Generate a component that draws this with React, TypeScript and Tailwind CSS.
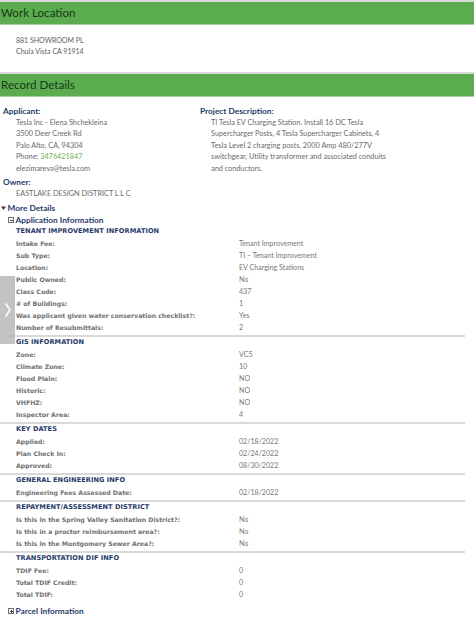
import React from "react";

const bodyFont = { fontFamily: "Lato, 'Open Sans', sans-serif" };

function SectionBar({ title }: { title: string }) {
  return (
    <div className="border-t-2 border-[#dadada] border-b border-b-[#a9cfa2] bg-[#5aac4f] h-[25px] flex items-center pl-[1px]">
      <span className="text-[11.6px] text-[#173a16] leading-none" style={bodyFont}>
        {title}
      </span>
    </div>
  );
}

type Row = [string, string];

function InfoGroup({ title, rows, last }: { title: string; rows: Row[]; last?: boolean }) {
  return (
    <div className={last ? "" : "border-b-2 border-[#d9d9d9] pb-[1px]"}>
      <div className="pl-[16px] h-[12px] flex items-center text-[6.6px] font-bold text-[#1f3a68] tracking-[0.05px]" style={{ fontFamily: "'DejaVu Sans', Verdana, sans-serif" }}>
        {title}
      </div>
      {rows.map(([k, v], i) => (
        <div key={i} className="flex h-[12px] items-center">
          <div className="pl-[16px] w-[239px] text-[6.2px] font-bold text-[#707070]" style={{ fontFamily: "'DejaVu Sans', Verdana, sans-serif" }}>
            {k}
          </div>
          <div className="text-[7.1px] text-[#777777]" style={bodyFont}>
            {v}
          </div>
        </div>
      ))}
    </div>
  );
}

export default function App() {
  return (
    <div className="relative w-[474px] h-[628px] bg-white overflow-hidden" style={bodyFont}>
      <SectionBar title="Work Location" />
      <div className="pl-[16px] pt-[10px] pb-[15px] text-[7px] leading-[11px] text-[#606060]">
        <div>881 SHOWROOM PL</div>
        <div>Chula Vista CA 91914</div>
      </div>
      <SectionBar title="Record Details" />

      <div className="flex pt-[8px]">
        <div className="w-[197px]">
          <div className="pl-[3px] h-[12px] flex items-center text-[8.3px] font-bold text-[#1f3a68]">Applicant:</div>
          <div className="pl-[16px] text-[7.3px] leading-[11.4px] text-[#6a6a6a]">
            <div>Tesla Inc - Elena Shchekleina</div>
            <div>3500 Deer Creek Rd</div>
            <div>Palo Alto, CA, 94304</div>
            <div>
              Phone: <span className="text-[#6db35a]">3476421847</span>
            </div>
            <div>elezimareva@tesla.com</div>
          </div>
        </div>
        <div className="flex-1">
          <div className="pl-[3px] h-[12px] flex items-center text-[8.3px] font-bold text-[#1f3a68]">Project Description:</div>
          <div className="pl-[14px] text-[7.3px] leading-[11.4px] text-[#6a6a6a] whitespace-nowrap">
            <div>TI Tesla EV Charging Station. Install 16 DC Tesla</div>
            <div>Supercharger Posts, 4 Tesla Supercharger Cabinets, 4</div>
            <div>Tesla Level 2 charging posts, 2000 Amp 480/277V</div>
            <div>switchgear, Utility transformer and associated conduits</div>
            <div>and conductors.</div>
          </div>
        </div>
      </div>

      <div className="mt-[2px] pl-[3px] h-[12px] flex items-center text-[8.3px] font-bold text-[#1f3a68]">Owner:</div>
      <div className="pl-[16px] text-[7.3px] leading-[11px] text-[#6a6a6a]">EASTLAKE DESIGN DISTRICT L L C</div>

      <div className="mt-[3px] h-[12px] flex items-center text-[8.3px] font-bold text-[#1f3a68]">
        <svg width="7" height="6" viewBox="0 0 7 6" className="mr-[0.5px]">
          <path d="M1 1.5 L6 1.5 L3.5 5 Z" fill="#3a3a3a" />
        </svg>
        More Details
      </div>
      <div className="h-[12px] flex items-center pl-[8px] text-[8.3px] font-bold text-[#1f3a68]">
        <span className="w-[6px] h-[6px] border border-[#6f6f6f] flex items-center justify-center mr-[1.5px]">
          <span className="w-[3px] h-[1px] bg-[#444]" />
        </span>
        Application Information
      </div>

      <div className="w-[465px]">
        <InfoGroup
          title="TENANT IMPROVEMENT INFORMATION"
          rows={[
            ["Intake Fee:", "Tenant Improvement"],
            ["Sub Type:", "TI \u2013 Tenant Improvement"],
            ["Location:", "EV Charging Stations"],
            ["Public Owned:", "No"],
            ["Class Code:", "437"],
            ["# of Buildings:", "1"],
            ["Was applicant given water conservation checklist?:", "Yes"],
            ["Number of Resubmittals:", "2"],
          ]}
        />
        <InfoGroup
          title="GIS INFORMATION"
          rows={[
            ["Zone:", "VC5"],
            ["Climate Zone:", "10"],
            ["Flood Plain:", "NO"],
            ["Historic:", "NO"],
            ["VHFHZ:", "NO"],
            ["Inspector Area:", "4"],
          ]}
        />
        <InfoGroup
          title="KEY DATES"
          rows={[
            ["Applied:", "02/18/2022"],
            ["Plan Check In:", "02/24/2022"],
            ["Approved:", "08/30/2022"],
          ]}
        />
        <InfoGroup title="GENERAL ENGINEERING INFO" rows={[["Engineering Fees Assessed Date:", "02/18/2022"]]} />
        <InfoGroup
          title="REPAYMENT/ASSESSMENT DISTRICT"
          rows={[
            ["Is this in the Spring Valley Sanitation District?:", "No"],
            ["Is this in a proctor reimbursement area?:", "No"],
            ["Is this in the Montgomery Sewer Area?:", "No"],
          ]}
        />
        <InfoGroup
          title="TRANSPORTATION DIF INFO"
          last
          rows={[
            ["TDIF Fee:", "0"],
            ["Total TDIF Credit:", "0"],
            ["Total TDIF:", "0"],
          ]}
        />
      </div>

      <div className="mt-[4px] h-[12px] flex items-center pl-[8px] text-[8.3px] font-bold text-[#1f3a68]">
        <span className="w-[6px] h-[6px] border border-[#6f6f6f] relative flex items-center justify-center mr-[1.5px]">
          <span className="w-[3px] h-[1px] bg-[#444]" />
          <span className="absolute w-[1px] h-[3px] bg-[#444]" />
        </span>
        Parcel Information
      </div>

      <div className="absolute left-0 top-[276px] w-[15px] h-[68px] rounded-r-[34px/34px] bg-[#b9b9b9]/85 flex items-center justify-center">
        <svg width="8" height="16" viewBox="0 0 8 16">
          <path d="M2 2 L6 8 L2 14" stroke="#ffffff" strokeWidth="1.6" fill="none" strokeLinecap="round" strokeLinejoin="round" />
        </svg>
      </div>
    </div>
  );
}
